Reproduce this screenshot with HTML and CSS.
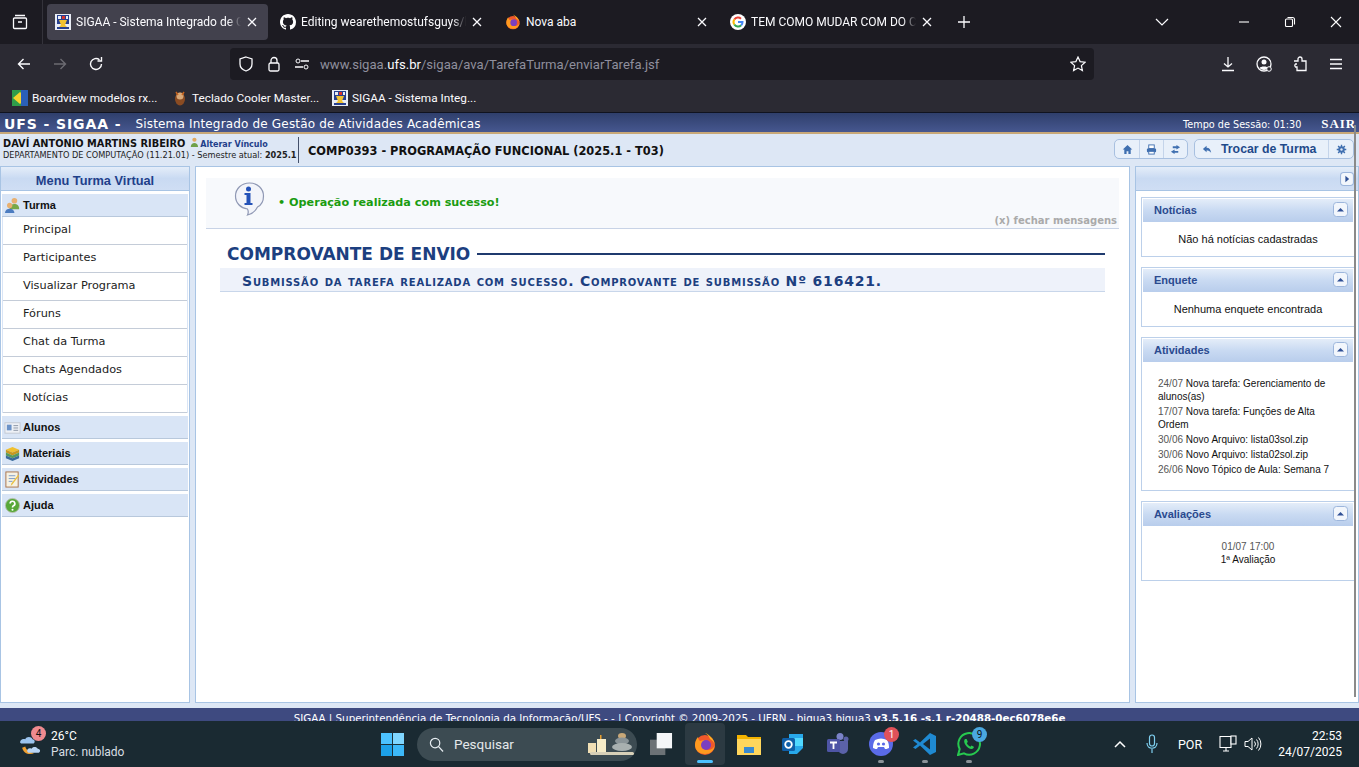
FILE: index.html
```html
<!DOCTYPE html>
<html lang="pt-BR">
<head>
<meta charset="UTF-8" />
<title>SIGAA - Sistema Integrado de Gestão de Atividades Acadêmicas</title>
<link rel="stylesheet" href="styles.css">
</head>
<body>
<svg class="defs" width="0" height="0">
  <symbol id="crest" viewBox="0 0 16 16">
    <rect width="16" height="16" fill="#e9edf5"/>
    <rect x="2" y="1" width="12" height="9" fill="#27408f"/>
    <rect x="3" y="2" width="3" height="3" fill="#e9edf5"/>
    <rect x="7" y="2" width="3" height="3" fill="#d8342c"/>
    <rect x="11" y="2" width="2" height="3" fill="#e9edf5"/>
    <path d="M4 6h8l-2 5 3 3H3l3-3z" fill="#f2c230"/>
    <rect x="2" y="13" width="12" height="2" fill="#27408f"/>
  </symbol>
  <symbol id="x" viewBox="0 0 12 12">
    <path d="M2 2l8 8M10 2l-8 8" stroke="currentColor" stroke-width="1.3" fill="none"/>
  </symbol>
  <symbol id="fox" viewBox="0 0 24 24">
    <circle cx="12" cy="13" r="10" fill="#f1582b"/>
    <path d="M12 1c4 1 9 6 10 12-1-3-3-5-5-6-1-3-3-5-5-6z" fill="#ffb020"/>
    <path d="M2 13c0-3 1-6 3-8 0 2 1 3 2 4 2-1 5-1 7 0-3 0-5 2-5 4 0 3 3 5 6 5 3 0 6-2 7-5-1 6-5 9-10 9-6 0-10-4-10-9z" fill="#ff9a1f"/>
    <circle cx="13" cy="13" r="5" fill="#7a3fc0"/>
  </symbol>
  <symbol id="up" viewBox="0 0 15 15">
    <rect x=".5" y=".5" width="14" height="14" rx="3" fill="#f2f6fc" stroke="#9db6dc"/>
    <path d="M4 9.500L7.500 6 11 9.500z" fill="#2e4f95"/>
  </symbol>
</svg>

<div class="tabbar">
  <svg class="view-icon" viewBox="0 0 16 16" width="16" height="16"><path d="M3 1.500h10M2.500 4h11a1 1 0 0 1 1 1v8.500a1 1 0 0 1-1 1h-11a1 1 0 0 1-1-1V5a1 1 0 0 1 1-1zM6 8h4" stroke="#fbfbfe" stroke-width="1.300" fill="none"/></svg>
  <span class="tab-sep"></span>
  <div class="tab tab-active">
    <svg class="fav"><use href="#crest"/></svg>
    <span class="tab-title tab-fade">SIGAA - Sistema Integrado de G</span>
    <svg class="tab-x"><use href="#x"/></svg>
  </div>
  <div class="tab">
    <svg class="fav" viewBox="0 0 16 16"><path fill="#fff" d="M8 0C3.580 0 0 3.580 0 8c0 3.540 2.290 6.530 5.470 7.590.4.070.55-.17.55-.38 0-.19-.01-.82-.01-1.490-2.010.37-2.530-.49-2.690-.94-.09-.23-.48-.94-.82-1.130-.28-.15-.68-.52-.01-.53.63-.01 1.080.58 1.230.82.720 1.210 1.870.87 2.330.66.070-.52.280-.87.510-1.070-1.780-.2-3.640-.89-3.640-3.950 0-.87.310-1.590.820-2.150-.08-.2-.36-1.020.080-2.120 0 0 .67-.21 2.200.82.640-.18 1.320-.27 2-.27s1.360.09 2 .27c1.530-1.040 2.200-.82 2.200-.82.44 1.100.16 1.920.08 2.120.51.560.82 1.270.82 2.150 0 3.070-1.870 3.750-3.650 3.950.29.250.54.730.54 1.480 0 1.070-.01 1.930-.01 2.200 0 .21.15.46.55.38A8.010 8.010 0 0 0 16 8c0-4.420-3.580-8-8-8z"/></svg>
    <span class="tab-title tab-fade">Editing wearethemostufsguys/b</span>
    <svg class="tab-x"><use href="#x"/></svg>
  </div>
  <div class="tab">
    <svg class="fav"><use href="#fox"/></svg>
    <span class="tab-title">Nova aba</span>
    <svg class="tab-x"><use href="#x"/></svg>
  </div>
  <div class="tab">
    <svg class="fav" viewBox="0 0 16 16"><circle cx="8" cy="8" r="8" fill="#fff"/><path d="M4.300 5.500A4.500 4.500 0 0 1 11 4.700" stroke="#ea4335" stroke-width="2" fill="none"/><path d="M4.300 10.500a4.500 4.500 0 0 1 0-5" stroke="#fbbc05" stroke-width="2" fill="none"/><path d="M11.200 11.300A4.500 4.500 0 0 1 4.300 10.500" stroke="#34a853" stroke-width="2" fill="none"/><path d="M8 8h4.500a4.500 4.500 0 0 1-1.300 3.300" stroke="#4285f4" stroke-width="2" fill="none"/></svg>
    <span class="tab-title tab-fade">TEM COMO MUDAR COM DO C</span>
    <svg class="tab-x"><use href="#x"/></svg>
  </div>
  <svg class="new-tab" viewBox="0 0 14 14" width="14" height="14"><path d="M7 1v12M1 7h12" stroke="#fbfbfe" stroke-width="1.300"/></svg>
  <svg class="tab-list" viewBox="0 0 14 8" width="14" height="8"><path d="M1 1l6 6 6-6" stroke="#fbfbfe" stroke-width="1.200" fill="none"/></svg>
  <div class="win-btns">
    <svg viewBox="0 0 12 12" width="12" height="12"><path d="M1 6h10" stroke="#fff" stroke-width="1.100"/></svg>
    <svg viewBox="0 0 12 12" width="12" height="12"><rect x="1.500" y="3" width="7" height="7.500" rx="1" stroke="#fff" fill="none" stroke-width="1.100"/><path d="M3.500 1.500h5a2 2 0 0 1 2 2v5" stroke="#fff" fill="none" stroke-width="1.100"/></svg>
    <svg viewBox="0 0 12 12" width="12" height="12"><path d="M1 1l10 10M11 1L1 11" stroke="#fff" stroke-width="1.100"/></svg>
  </div>
</div>

<div class="navbar">
  <svg class="nav-ico" viewBox="0 0 16 16"><path d="M14 8H2.500M7.500 3l-5 5 5 5" stroke="#fbfbfe" stroke-width="1.400" fill="none"/></svg>
  <svg class="nav-ico" viewBox="0 0 16 16"><path d="M2 8h11.500M8.500 3l5 5-5 5" stroke="#6c6b72" stroke-width="1.400" fill="none"/></svg>
  <svg class="nav-ico" viewBox="0 0 16 16"><path d="M13.500 8a5.500 5.500 0 1 1-2-4.300M13.500 1v4h-4" stroke="#fbfbfe" stroke-width="1.400" fill="none"/></svg>
  <div class="urlbar">
    <svg class="url-ico" viewBox="0 0 16 16"><path d="M8 1l6 2v5c0 3.500-3 6-6 7-3-1-6-3.500-6-7V3z" stroke="#fbfbfe" stroke-width="1.300" fill="none"/></svg>
    <svg class="url-ico" viewBox="0 0 16 16"><rect x="3" y="7" width="10" height="8" rx="1.500" stroke="#fbfbfe" stroke-width="1.300" fill="none"/><path d="M5 7V4.500a3 3 0 0 1 6 0V7" stroke="#fbfbfe" stroke-width="1.300" fill="none"/></svg>
    <svg class="url-ico url-ico-last" viewBox="0 0 16 16"><path d="M7 5h8M1 11h8" stroke="#fbfbfe" stroke-width="1.300"/><circle cx="4" cy="5" r="2" stroke="#fbfbfe" fill="none"/><circle cx="12" cy="11" r="2" stroke="#fbfbfe" fill="none"/></svg>
    <span class="url">www.sigaa.<b>ufs.br</b>/sigaa/ava/TarefaTurma/enviarTarefa.jsf</span>
    <svg class="star" viewBox="0 0 16 16"><path d="M8 1l2.100 4.600 5 .6-3.700 3.400 1 5L8 12.100 3.600 14.600l1-5L.9 6.200l5-.6z" stroke="#fbfbfe" stroke-width="1.200" fill="none"/></svg>
  </div>
  <div class="nav-right">
    <svg class="nav-ico" viewBox="0 0 16 16"><path d="M8 1v10M4 7.500L8 11l4-3.500M2 14.500h12" stroke="#fbfbfe" stroke-width="1.300" fill="none"/></svg>
    <svg class="nav-ico" viewBox="0 0 16 16"><circle cx="8" cy="8" r="7" stroke="#fbfbfe" stroke-width="1.300" fill="none"/><circle cx="8" cy="6" r="2.500" fill="#fbfbfe"/><path d="M3.500 12c1-2 8-2 9 0a6 6 0 0 1-9 0z" fill="#fbfbfe"/><circle cx="13" cy="13" r="2.300" fill="#2b2a33" stroke="#fbfbfe"/></svg>
    <svg class="nav-ico" viewBox="0 0 16 16"><path d="M2 5h4V3a2 2 0 0 1 4 0v2h4v9.500H5V11H3.500a2 2 0 0 1 0-3H5" stroke="#fbfbfe" stroke-width="1.300" fill="none"/></svg>
    <svg class="nav-ico" viewBox="0 0 16 16"><path d="M2 3.500h12M2 8h12M2 12.500h12" stroke="#fbfbfe" stroke-width="1.300"/></svg>
  </div>
</div>

<div class="bookmarks">
  <div class="bm">
    <svg class="fav" viewBox="0 0 16 16"><rect width="16" height="16" fill="#2f9d4a"/><path d="M8 2l7 6-7 6-7-6z" fill="#f6d32d"/><rect x="9" y="0" width="7" height="16" fill="#2b5fb8"/></svg>
    <span>Boardview modelos rx...</span>
  </div>
  <div class="bm">
    <svg class="fav" viewBox="0 0 16 16"><ellipse cx="8" cy="9" rx="5" ry="6.500" fill="#8a4b22"/><circle cx="8" cy="6" r="3.500" fill="#d8a878"/><path d="M4 2l2 3M12 2l-2 3" stroke="#c8641e" stroke-width="1.500"/></svg>
    <span>Teclado Cooler Master...</span>
  </div>
  <div class="bm">
    <svg class="fav"><use href="#crest"/></svg>
    <span>SIGAA - Sistema Integ...</span>
  </div>
</div>

<div class="page">
  <div class="sys-bar">
    <span class="sys-name">UFS - SIGAA -</span>
    <span class="sys-full">Sistema Integrado de Gestão de Atividades Acadêmicas</span>
    <span class="sys-time">Tempo de Sessão: 01:30</span>
    <span class="sys-exit">SAIR</span>
  </div>
  <div class="info-bar">
    <div class="user-info">
      <div class="user-name">DAVÍ ANTONIO MARTINS RIBEIRO
        <svg class="mini" viewBox="0 0 12 12"><circle cx="7" cy="3" r="2.300" fill="#e0a860"/><path d="M3 11c0-6 8-6 8 0z" fill="#6ea04a"/></svg>
        <a class="user-link">Alterar Vínculo</a></div>
      <div class="user-dept">DEPARTAMENTO DE COMPUTAÇÃO (11.21.01) - Semestre atual: <b>2025.1</b></div>
    </div>
    <div class="course">COMP0393 - PROGRAMAÇÃO FUNCIONAL (2025.1 - T03)</div>
    <div class="btn-group">
      <span class="icon-btn"><svg viewBox="0 0 12 12"><path d="M6 1L.8 6h1.700v5h2.500V8h2v3h2.500V6h1.700z" fill="#3f6fb0"/></svg></span>
      <span class="icon-btn"><svg viewBox="0 0 12 12"><rect x="3" y="1" width="6" height="4" fill="#fff" stroke="#3f6fb0"/><rect x="1" y="5" width="10" height="4" rx="1" fill="#3f6fb0"/><rect x="3" y="8" width="6" height="3" fill="#fff" stroke="#3f6fb0"/></svg></span>
      <span class="icon-btn"><svg viewBox="0 0 12 12"><path d="M7 1l4 2.500L7 6V4.500H3V2.500h4zM5 6L1 8.500 5 11V9.500h4v-2H5z" fill="#3f6fb0"/></svg></span>
    </div>
    <div class="btn-group btn-group-2">
      <span class="icon-btn"><svg viewBox="0 0 12 12"><path d="M5 2L1 5.500 5 9V7c2 0 3.500.5 5 2.500C9.500 6 8 4 5 4z" fill="#3f6fb0"/></svg></span>
      <span class="trocar">Trocar de Turma</span>
      <span class="icon-btn"><svg viewBox="0 0 12 12"><circle cx="6" cy="6" r="3.500" fill="#3f6fb0"/><path d="M6 .8v10.400M.8 6h10.400M2.300 2.300l7.400 7.400M9.700 2.300l-7.400 7.400" stroke="#3f6fb0" stroke-width="1.500"/><circle cx="6" cy="6" r="1.300" fill="#dfe8f6"/></svg></span>
    </div>
  </div>

  <div class="main">
    <div class="side-menu">
      <div class="menu-title">Menu Turma Virtual</div>
      <div class="menu-head menu-head-open">
        <svg class="menu-ico" viewBox="0 0 18 18"><circle cx="11" cy="4" r="3" fill="#e8b070"/><path d="M6 12c0-6 10-6 10 0v1H6z" fill="#78a848"/><circle cx="6" cy="9" r="2.800" fill="#e8b070"/><path d="M1 17c0-6 10-6 10 0z" fill="#4c7cc0"/></svg>
        <span>Turma</span>
      </div>
      <ul class="menu-list">
        <li>Principal</li>
        <li>Participantes</li>
        <li>Visualizar Programa</li>
        <li>Fóruns</li>
        <li>Chat da Turma</li>
        <li>Chats Agendados</li>
        <li>Notícias</li>
      </ul>
      <div class="menu-head">
        <svg class="menu-ico" viewBox="0 0 18 18"><rect x="1" y="4" width="16" height="11" fill="#eef1f6" stroke="#c2c8d2"/><rect x="3" y="6" width="5" height="6" fill="#6b92c8"/><path d="M10 7h5M10 9.500h5M10 12h5" stroke="#8a94a4"/></svg>
        <span>Alunos</span>
      </div>
      <div class="menu-head">
        <svg class="menu-ico" viewBox="0 0 18 18"><path d="M2 5l7-3 7 3-7 3z" fill="#f0c030"/><path d="M2 5v3l7 3 7-3V5l-7 3z" fill="#c89820"/><path d="M2 8v3l7 3 7-3V8l-7 3z" fill="#5a9a5a"/><path d="M2 11v3l7 3 7-3v-3l-7 3z" fill="#3a6a9a"/></svg>
        <span>Materiais</span>
      </div>
      <div class="menu-head">
        <svg class="menu-ico" viewBox="0 0 18 18"><rect x="2" y="1" width="13" height="16" fill="#f6f2e4" stroke="#a8734a"/><path d="M5 5h7M5 8h7M5 11h4" stroke="#7a9ac8"/><path d="M16 5l-7 9-2 2 1-3 7-9z" fill="#e8c040"/></svg>
        <span>Atividades</span>
      </div>
      <div class="menu-head">
        <svg class="menu-ico" viewBox="0 0 18 18"><circle cx="9" cy="9" r="7.500" fill="#58a838" stroke="#b8c0b0"/><path d="M6.500 7a2.500 2.500 0 1 1 3.500 2.300c-.7.4-1 .7-1 1.700" stroke="#fff" stroke-width="1.800" fill="none"/><circle cx="9" cy="13.500" r="1.100" fill="#fff"/></svg>
        <span>Ajuda</span>
      </div>
    </div>

    <div class="content">
      <div class="msg-box">
        <div class="msg-row">
          <svg class="msg-ico" viewBox="0 0 32 34"><path d="M16 1C8 1 2 6.500 2 14c0 7 5 12 12 13 1 2 1 4 0 6 4-1 8-4 10-8 4-2 6-6 6-11C30 6.500 24 1 16 1z" fill="#f2f4fa" stroke="#8f98b4" stroke-width="1.200"/><circle cx="15" cy="7" r="2.500" fill="#2452b8"/><path d="M11 11h6v10h2v2h-8v-2h2v-8h-2z" fill="#2452b8"/></svg>
          <span class="msg-text">• Operação realizada com sucesso!</span>
        </div>
        <div class="msg-close">(x) fechar mensagens</div>
      </div>
      <div class="title-row">
        <h2>COMPROVANTE DE ENVIO</h2>
        <span class="title-line"></span>
      </div>
      <h3 class="sub-title">Submissão da tarefa realizada com sucesso. Comprovante de submissão Nº 616421.</h3>
    </div>

    <div class="side-right">
      <div class="right-top">
        <svg class="right-btn" viewBox="0 0 13 13"><rect x=".5" y=".5" width="12" height="12" rx="3" fill="#f2f6fc" stroke="#9db6dc"/><path d="M5 3.500L8.500 6.500 5 9.500z" fill="#2e4f95"/></svg>
      </div>
      <div class="box">
        <div class="box-head"><span>Notícias</span><svg><use href="#up"/></svg></div>
        <div class="box-center">Não há notícias cadastradas</div>
      </div>
      <div class="box">
        <div class="box-head"><span>Enquete</span><svg><use href="#up"/></svg></div>
        <div class="box-center">Nenhuma enquete encontrada</div>
      </div>
      <div class="box">
        <div class="box-head"><span>Atividades</span><svg><use href="#up"/></svg></div>
        <ul class="activity">
          <li><i>24/07</i> Nova tarefa: Gerenciamento de alunos(as)</li>
          <li><i>17/07</i> Nova tarefa: Funções de Alta Ordem</li>
          <li><i>30/06</i> Novo Arquivo: lista03sol.zip</li>
          <li><i>30/06</i> Novo Arquivo: lista02sol.zip</li>
          <li><i>26/06</i> Novo Tópico de Aula: Semana 7</li>
        </ul>
      </div>
      <div class="box">
        <div class="box-head"><span>Avaliações</span><svg><use href="#up"/></svg></div>
        <div class="eval">
          <div class="eval-date">01/07 17:00</div>
          <div>1ª Avaliação</div>
        </div>
      </div>
    </div>
  </div>

  <div class="footer">
    <div class="footer-text">SIGAA | Superintendência de Tecnologia da Informação/UFS - - | Copyright © 2009-2025 - UFRN - bigua3.bigua3 <b>v3.5.16 -s.1 r-20488-0ec6078e6e</b></div>
  </div>
  <div class="page-scroll"></div>
</div>

<div class="taskbar">
  <div class="weather">
    <svg class="weather-ico" viewBox="0 0 24 24"><path d="M1 10c0-3 3-4 5-3 1-3 6-3 7 0 2 0 3 3 1 4H2z" fill="#9cc4ee"/><path d="M3 15c1 5 7 8 12 5-4 0-8-2-9-6z" fill="#f0a030"/><path d="M8 19c-1-3 2-4 4-3 1-2 5-2 6 0 3 0 3 4 0 4H9z" fill="#b8d4f4"/></svg>
    <span class="weather-badge">4</span>
    <div class="weather-text">
      <div class="temp">26°C</div>
      <div class="cond">Parc. nublado</div>
    </div>
  </div>
  <svg class="win-logo" viewBox="0 0 24 24"><rect width="11.500" height="11.500" fill="#4cc2ff"/><rect x="12.500" width="11.500" height="11.500" fill="#7fd6ff"/><rect y="12.500" width="11.500" height="11.500" fill="#1ca0e8"/><rect x="12.500" y="12.500" width="11.500" height="11.500" fill="#3cb8f8"/></svg>
  <div class="search">
    <svg class="search-ico" viewBox="0 0 16 16"><circle cx="6.500" cy="6.500" r="5" stroke="#e8eef2" stroke-width="1.300" fill="none"/><path d="M10 10l5 5.500" stroke="#e8eef2" stroke-width="1.300"/></svg>
    <span>Pesquisar</span>
    <svg class="search-art" viewBox="0 0 50 26"><rect x="2" y="12" width="8" height="10" fill="#f0dfb4"/><rect x="11" y="8" width="9" height="14" fill="#f6ecc8"/><rect x="14" y="4" width="1.500" height="4" fill="#e8a030"/><ellipse cx="36" cy="5" rx="4" ry="3" fill="#c8a878"/><ellipse cx="36" cy="10" rx="7" ry="3.500" fill="#8a9498"/><ellipse cx="36" cy="16" rx="10" ry="4" fill="#a8b0b0"/><rect x="4" y="21" width="44" height="3" rx="1.500" fill="#d8d0b8"/></svg>
  </div>
  <svg class="task-view" viewBox="0 0 24 24"><rect y="7" width="16" height="16" fill="#6c7276"/><rect x="7" width="16" height="16" fill="#f4f6f8"/></svg>
  <div class="apps">
    <span class="app app-active"><svg viewBox="0 0 24 24"><use href="#fox"/></svg><i class="run run-on"></i></span>
    <span class="app"><svg viewBox="0 0 24 24"><path d="M0 3h9l2 2h13v18H0z" fill="#f4b400"/><rect x="0" y="7" width="24" height="16" fill="#ffd65c"/><rect x="7" y="15" width="10" height="6" fill="#3a8ad0"/></svg></span>
    <span class="app"><svg viewBox="0 0 24 24"><path d="M8 2h14v14l-6 6H8z" fill="#28a8ea"/><path d="M12 6h10v8H12z" fill="#50d9ff"/><rect x="1" y="6" width="13" height="13" rx="1.500" fill="#0f5fa8"/><circle cx="7.500" cy="12.500" r="3.300" stroke="#fff" stroke-width="1.800" fill="none"/></svg></span>
    <span class="app"><svg viewBox="0 0 24 24"><circle cx="15" cy="4.500" r="3.500" fill="#7b83c8"/><circle cx="21" cy="7" r="2.500" fill="#5b62a8"/><path d="M11 9h12v8a5 5 0 0 1-10 0z" fill="#5b62a8"/><rect x="2" y="7" width="13" height="13" rx="1.500" fill="#4e55a5"/><path d="M5 10.500h7M8.500 10.500V17" stroke="#fff" stroke-width="1.800"/></svg></span>
    <span class="app"><svg viewBox="0 0 24 24"><circle cx="12" cy="12" r="12" fill="#5a6be8"/><path d="M6 8c4-2 8-2 12 0 2 3 2 6 2 8-2 1-3 1-4 1l-1-2H9l-1 2c-1 0-2 0-4-1 0-2 0-5 2-8z" fill="#fff"/><circle cx="9.500" cy="12" r="1.600" fill="#5a6be8"/><circle cx="14.500" cy="12" r="1.600" fill="#5a6be8"/></svg><b class="app-badge app-badge-red">1</b><i class="run"></i></span>
    <span class="app"><svg viewBox="0 0 24 24"><path d="M17 1l6 3v16l-6 3L7 13.500 2.500 17 0 15.500 4.500 12 0 8.500 2.500 7 7 10.500z" fill="#1f8ad2"/><path d="M17 6.500L10 12l7 5.500z" fill="#1b2a33"/></svg><i class="run"></i></span>
    <span class="app"><svg viewBox="0 0 24 24"><path d="M1 23l1.700-6A10.800 10.800 0 1 1 7 21.300z" fill="#1b2a33" stroke="#27c94f" stroke-width="2"/><path d="M8 7c-1 1-1.500 3 .5 6s5 4.500 6.500 4c1.500-.5 2-1.500 1.800-2.300l-2.300-1.200-1.100 1.200c-1.500-.5-3-2-3.600-3.600l1.100-1.200L9.600 7z" fill="#27c94f"/></svg><b class="app-badge app-badge-blue">9</b><i class="run"></i></span>
  </div>
  <div class="tray">
    <svg class="tray-chev" viewBox="0 0 12 8"><path d="M1 7l5-5 5 5" stroke="#fff" stroke-width="1.500" fill="none"/></svg>
    <svg class="tray-mic" viewBox="0 0 12 20"><rect x="3.500" y="1" width="5" height="11" rx="2.500" stroke="#7fd0f0" stroke-width="1.200" fill="none"/><path d="M1 9c0 7 10 7 10 0M6 15v4" stroke="#7fd0f0" stroke-width="1.200" fill="none"/></svg>
    <span class="tray-lang">POR</span>
    <svg class="tray-net" viewBox="0 0 18 18"><path d="M1 1.500h11v11H1zM4 16h6M7 13v3" stroke="#fff" stroke-width="1.100" fill="none"/><rect x="12" y="1" width="5" height="8" fill="#1b2a33" stroke="#fff" stroke-width="1.100"/></svg>
    <svg class="tray-vol" viewBox="0 0 18 18"><path d="M1 6.500h3L8 3v12L4 11.500H1z" stroke="#fff" fill="none"/><path d="M10.500 6.500a4 4 0 0 1 0 5M12.500 4.500a7 7 0 0 1 0 9M14.500 2.500a10 10 0 0 1 0 13" stroke="#fff" fill="none"/></svg>
    <div class="clock">
      <div>22:53</div>
      <div>24/07/2025</div>
    </div>
  </div>
</div>
</body>
</html>
```

FILE: styles.css
```css
* {
  box-sizing: border-box;
}
html, body {
  margin: 0;
  height: 767px;
  overflow: hidden;
}
body {
  display: flex;
  flex-direction: column;
  font-family: Roboto, sans-serif;
  background: #1c1b22;
}
.defs {
  position: absolute;
}

/* browser */
.tabbar {
  height: 44px;
  flex-shrink: 0;
  background: #1c1b22;
  display: flex;
  align-items: center;
  color: #fbfbfe;
  font-size: 12px;
}
.view-icon {
  margin-left: 12px;
}
.tab-sep {
  width: 1px;
  height: 44px;
  background: #34333b;
  margin: 0 4px 0 14px;
}
.tab {
  width: 221px;
  height: 36px;
  margin-right: 4px;
  border-radius: 4px;
  padding: 0 10px 0 8px;
  display: flex;
  align-items: center;
  gap: 5px;
}
.tab-active {
  background: #42414d;
}
.fav {
  width: 16px;
  height: 16px;
  flex-shrink: 0;
}
.tab-title {
  flex: 1;
  min-width: 0;
  white-space: nowrap;
}
.tab-fade {
  -webkit-mask-image: linear-gradient(to right, #000 92%, transparent 100%);
  mask-image: linear-gradient(to right, #000 92%, transparent 100%);
}
.tab-x {
  width: 12px;
  height: 12px;
  color: #fbfbfe;
  flex-shrink: 0;
}
.new-tab {
  margin-left: 10px;
}
.tab-list {
  margin-left: 184px;
}
.win-btns {
  margin-left: auto;
  display: flex;
  gap: 34px;
  padding-right: 17px;
}
.navbar {
  height: 40px;
  flex-shrink: 0;
  background: #2b2a33;
  display: flex;
  align-items: center;
  padding-left: 16px;
}
.nav-ico {
  width: 16px;
  height: 16px;
  margin-right: 20px;
  flex-shrink: 0;
}
.urlbar {
  width: 864px;
  height: 32px;
  flex-shrink: 0;
  margin-left: 106px;
  background: #1c1b22;
  border-radius: 4px;
  display: flex;
  align-items: center;
  padding: 0 8px;
}
.url-ico {
  width: 16px;
  height: 16px;
  margin-right: 12px;
}
.url-ico-last {
  margin-right: 10px;
}
.url {
  color: #8f8f9d;
  font-size: 13.100px;
  white-space: nowrap;
  padding-top: 1px;
}
.url b {
  font-weight: 400;
  color: #fbfbfe;
}
.star {
  width: 16px;
  height: 16px;
  margin-left: auto;
}
.nav-right {
  display: flex;
  flex-shrink: 0;
  margin-left: 126px;
}
.bookmarks {
  height: 28px;
  flex-shrink: 0;
  background: #2b2a33;
  display: flex;
  align-items: center;
  padding-left: 12px;
  color: #fbfbfe;
  font-size: 11.800px;
}
.bm {
  display: flex;
  align-items: center;
  gap: 4px;
  width: 160px;
  white-space: nowrap;
}

/* sigaa */
.page {
  flex: 1;
  min-height: 0;
  background: #dde7f5;
  display: flex;
  flex-direction: column;
  position: relative;
  font-family: "DejaVu Sans", Verdana, sans-serif;
  overflow: hidden;
  border-top: 1px solid #10131f;
}
.sys-bar {
  height: 21px;
  flex-shrink: 0;
  background: linear-gradient(#2f3f6c, #46578f);
  border-bottom: 2px solid #c8a878;
  display: flex;
  align-items: center;
  padding: 3px 0 0 4px;
  color: #fff;
}
.sys-name {
  font-weight: 700;
  font-size: 14px;
  letter-spacing: .9px;
}
.sys-full {
  font-size: 12px;
  letter-spacing: .17px;
  margin-left: 14px;
}
.sys-time {
  margin-left: auto;
  font-size: 9.700px;
}
.sys-exit {
  font-family: "Liberation Serif", serif;
  font-weight: 700;
  font-size: 13px;
  margin-left: 20px;
  margin-right: 3px;
  letter-spacing: .9px;
}
.info-bar {
  height: 32px;
  flex-shrink: 0;
  display: flex;
  align-items: center;
}
.user-info {
  width: 299px;
  height: 26px;
  padding: 0 0 0 3px;
  border-right: 1px solid #44506a;
  white-space: nowrap;
  font-size: 8.200px;
  color: #222;
}
.user-name {
  font-weight: 700;
  font-size: 9.800px;
  line-height: 11px;
  color: #111;
}
.user-link {
  color: #1f3f8a;
  font-size: 8px;
  margin-left: -2px;
}
.mini {
  width: 11px;
  height: 11px;
  vertical-align: -1px;
  margin-left: -1px;
}
.user-dept {
  line-height: 10px;
}
.course {
  margin-left: 9px;
  font-size: 11.400px;
  font-weight: 700;
  color: #111;
  padding-top: 2px;
}
.btn-group {
  margin-left: auto;
  height: 20px;
  display: flex;
  background: #e8f0fa;
  border: 1px solid #a8c0e0;
  border-radius: 5px;
  align-items: center;
  margin-top: -2px;
}
.icon-btn {
  width: 24px;
  height: 18px;
  display: flex;
  align-items: center;
  justify-content: center;
}
.icon-btn + .icon-btn {
  border-left: 1px solid #c4d4ea;
}
.icon-btn svg {
  width: 11px;
  height: 11px;
}
.btn-group-2 {
  margin-left: 6px;
  margin-right: 5px;
}
.trocar {
  font-family: "Liberation Sans", sans-serif;
  font-weight: 700;
  font-size: 12.300px;
  color: #1f4a8a;
  width: 110px;
  height: 18px;
  line-height: 18px;
  padding-left: 2px;
  border-right: 1px solid #c4d4ea;
}
.main {
  flex: 1;
  min-height: 0;
  display: flex;
  gap: 5px;
}
.side-menu, .content, .side-right {
  background: #fff;
  border: 1px solid #a8c4e4;
}
.side-menu {
  width: 190px;
  flex-shrink: 0;
  padding: 0 1px;
}
.menu-title {
  height: 24px;
  line-height: 27px;
  margin: 0 -1px 3px;
  text-align: center;
  font-family: "Liberation Sans", sans-serif;
  font-weight: 700;
  font-size: 12.800px;
  color: #1f3f8a;
  background: linear-gradient(#e4edf9, #c9daf2 50%, #cfdef4);
  border-bottom: 1px solid #a8c4e4;
}
.menu-head {
  height: 23px;
  margin-bottom: 3px;
  background: #d9e5f6;
  border-bottom: 1px solid #b8c8dc;
  display: flex;
  align-items: center;
  font-family: "Liberation Sans", sans-serif;
  font-weight: 700;
  font-size: 11px;
  color: #111;
  padding-left: 2px;
  gap: 2px;
}
.menu-head-open {
  margin-bottom: 0;
}
.menu-ico {
  width: 17px;
  height: 17px;
}
.menu-list {
  list-style: none;
  margin: 0 0 3px;
  padding: 0;
  border-left: 1px solid #d9e5f6;
  border-right: 1px solid #d9e5f6;
}
.menu-list li {
  height: 28px;
  line-height: 25px;
  padding-left: 20px;
  font-size: 11.300px;
  color: #222;
  border-bottom: 1px solid #c4ccd8;
}
.content {
  flex: 1;
  padding: 11px 10px 0;
}
.msg-box {
  height: 51px;
  background: #f7f9fc;
  border-bottom: 1px solid #c8d3e6;
  position: relative;
}
.msg-row {
  display: flex;
  align-items: center;
  padding: 4px 0 0 27px;
}
.msg-ico {
  width: 33px;
  height: 34px;
}
.msg-text {
  margin-left: 12px;
  margin-top: 6px;
  color: #1a9c10;
  font-weight: 700;
  font-size: 11.200px;
}
.msg-close {
  position: absolute;
  right: 2px;
  bottom: 2px;
  font-size: 10px;
  font-weight: 700;
  color: #aaa;
}
.title-row {
  display: flex;
  align-items: center;
  margin: 15px 14px 0 21px;
}
.title-row h2 {
  margin: 0;
  font-size: 17px;
  font-weight: 700;
  color: #1c3f80;
  white-space: nowrap;
}
.title-line {
  flex: 1;
  height: 2px;
  margin-left: 7px;
  background: #1f3a6e;
}
.sub-title {
  margin: 4px 14px 0 14px;
  height: 24px;
  line-height: 26px;
  padding-left: 22px;
  background: #eef2fa;
  border-bottom: 1px solid #c8d6ea;
  font-variant: small-caps;
  font-size: 14px;
  letter-spacing: .81px;
  font-weight: 700;
  color: #1c3f80;
  white-space: nowrap;
}
.side-right {
  width: 224px;
  flex-shrink: 0;
}
.right-top {
  height: 24px;
  background: linear-gradient(#e4edf9, #c9daf2 50%, #cfdef4);
  border-bottom: 1px solid #a8c4e4;
  display: flex;
  justify-content: flex-end;
  align-items: center;
  padding-right: 4px;
  margin-bottom: 6px;
}
.right-btn {
  width: 14px;
  height: 14px;
}
.box {
  margin: 0 3px 10px 5px;
  border: 1px solid #bcd0ea;
  padding: 1px;
  font-family: "Liberation Sans", sans-serif;
  font-size: 10px;
  color: #111;
}
.box-head {
  height: 23px;
  background: linear-gradient(#e4edf9, #c9daf2 50%, #b8cdec);
  display: flex;
  align-items: center;
  justify-content: space-between;
  padding: 0 5px 2px 11px;
  font-weight: 700;
  font-size: 11px;
  color: #2a4a8f;
}
.box-head svg {
  width: 15px;
  height: 15px;
}
.box-center {
  text-align: center;
  padding-top: 11px;
  height: 33px;
  font-size: 11px;
}
.activity {
  list-style: none;
  margin: 0;
  padding: 15px 10px 11px 15px;
  line-height: 13px;
}
.activity li {
  margin-bottom: 2px;
}
.activity i, .eval-date {
  font-style: normal;
  color: #555;
}
.eval {
  text-align: center;
  padding: 14px 0 13px;
  line-height: 13px;
}
.footer {
  height: 18px;
  flex-shrink: 0;
  overflow: hidden;
  padding-top: 5px;
}
.footer-text {
  height: 13px;
  background: #3e4a80;
  color: #fff;
  font-size: 10.300px;
  line-height: 20px;
  text-align: center;
  white-space: nowrap;
  overflow: hidden;
}
.page-scroll {
  position: absolute;
  top: 12px;
  right: 3px;
  width: 2px;
  height: 572px;
  background: #8a8a8a;
}

/* windows */
.taskbar {
  height: 46px;
  flex-shrink: 0;
  background: #1a2a32;
  display: flex;
  align-items: center;
  color: #fff;
}
.weather {
  display: flex;
  align-items: center;
  width: 381px;
  padding-left: 19px;
  position: relative;
}
.weather-ico {
  width: 25px;
  height: 25px;
}
.weather-badge {
  position: absolute;
  left: 31px;
  top: -2px;
  width: 15px;
  height: 15px;
  border-radius: 50%;
  background: #ef8a8f;
  color: #111;
  font-size: 10px;
  line-height: 15px;
  text-align: center;
}
.weather-text {
  margin-left: 7px;
  font-size: 12px;
  line-height: 16px;
}
.cond {
  color: #d8dee2;
}
.win-logo {
  width: 23px;
  height: 23px;
  flex-shrink: 0;
}
.search {
  margin-left: 13px;
  width: 220px;
  height: 33px;
  border-radius: 17px;
  background: #3c4b52;
  display: flex;
  align-items: center;
  padding-left: 12px;
  font-size: 13.500px;
  color: #e4e8ea;
  flex-shrink: 0;
}
.search-ico {
  width: 15px;
  height: 17px;
  margin-right: 10px;
}
.search-art {
  width: 50px;
  height: 26px;
  margin-left: auto;
  margin-right: 1px;
}
.task-view {
  width: 23px;
  height: 23px;
  margin-left: 13px;
  flex-shrink: 0;
}
.apps {
  display: flex;
  margin-left: 12px;
  gap: 4px;
}
.app {
  width: 40px;
  height: 42px;
  display: flex;
  align-items: center;
  justify-content: center;
  position: relative;
  border-radius: 4px;
}
.app svg {
  width: 24px;
  height: 24px;
}
.app-active {
  background: #2c3a42;
}
.run {
  position: absolute;
  bottom: 2px;
  left: 17px;
  width: 6px;
  height: 3px;
  border-radius: 2px;
  background: #8a9298;
}
.run-on {
  left: 12px;
  width: 16px;
  background: #4cc2ff;
}
.app-badge {
  position: absolute;
  right: 2px;
  top: 4px;
  width: 15px;
  height: 15px;
  border-radius: 50%;
  font-size: 10px;
  font-weight: 400;
  line-height: 15px;
  text-align: center;
}
.app-badge-red {
  background: #e0525a;
  color: #fff;
}
.app-badge-blue {
  background: #4aa8e0;
  color: #111;
}
.tray {
  margin-left: auto;
  display: flex;
  align-items: center;
  padding-right: 17px;
}
.tray-chev {
  width: 12px;
  height: 8px;
}
.tray-mic {
  width: 12px;
  height: 20px;
  margin-left: 20px;
}
.tray-lang {
  font-size: 12.500px;
  margin-left: 20px;
}
.tray-net {
  width: 18px;
  height: 18px;
  margin-left: 17px;
}
.tray-vol {
  width: 18px;
  height: 18px;
  margin-left: 7px;
}
.clock {
  margin-left: 16px;
  text-align: right;
  font-size: 12px;
  line-height: 16px;
}
```
